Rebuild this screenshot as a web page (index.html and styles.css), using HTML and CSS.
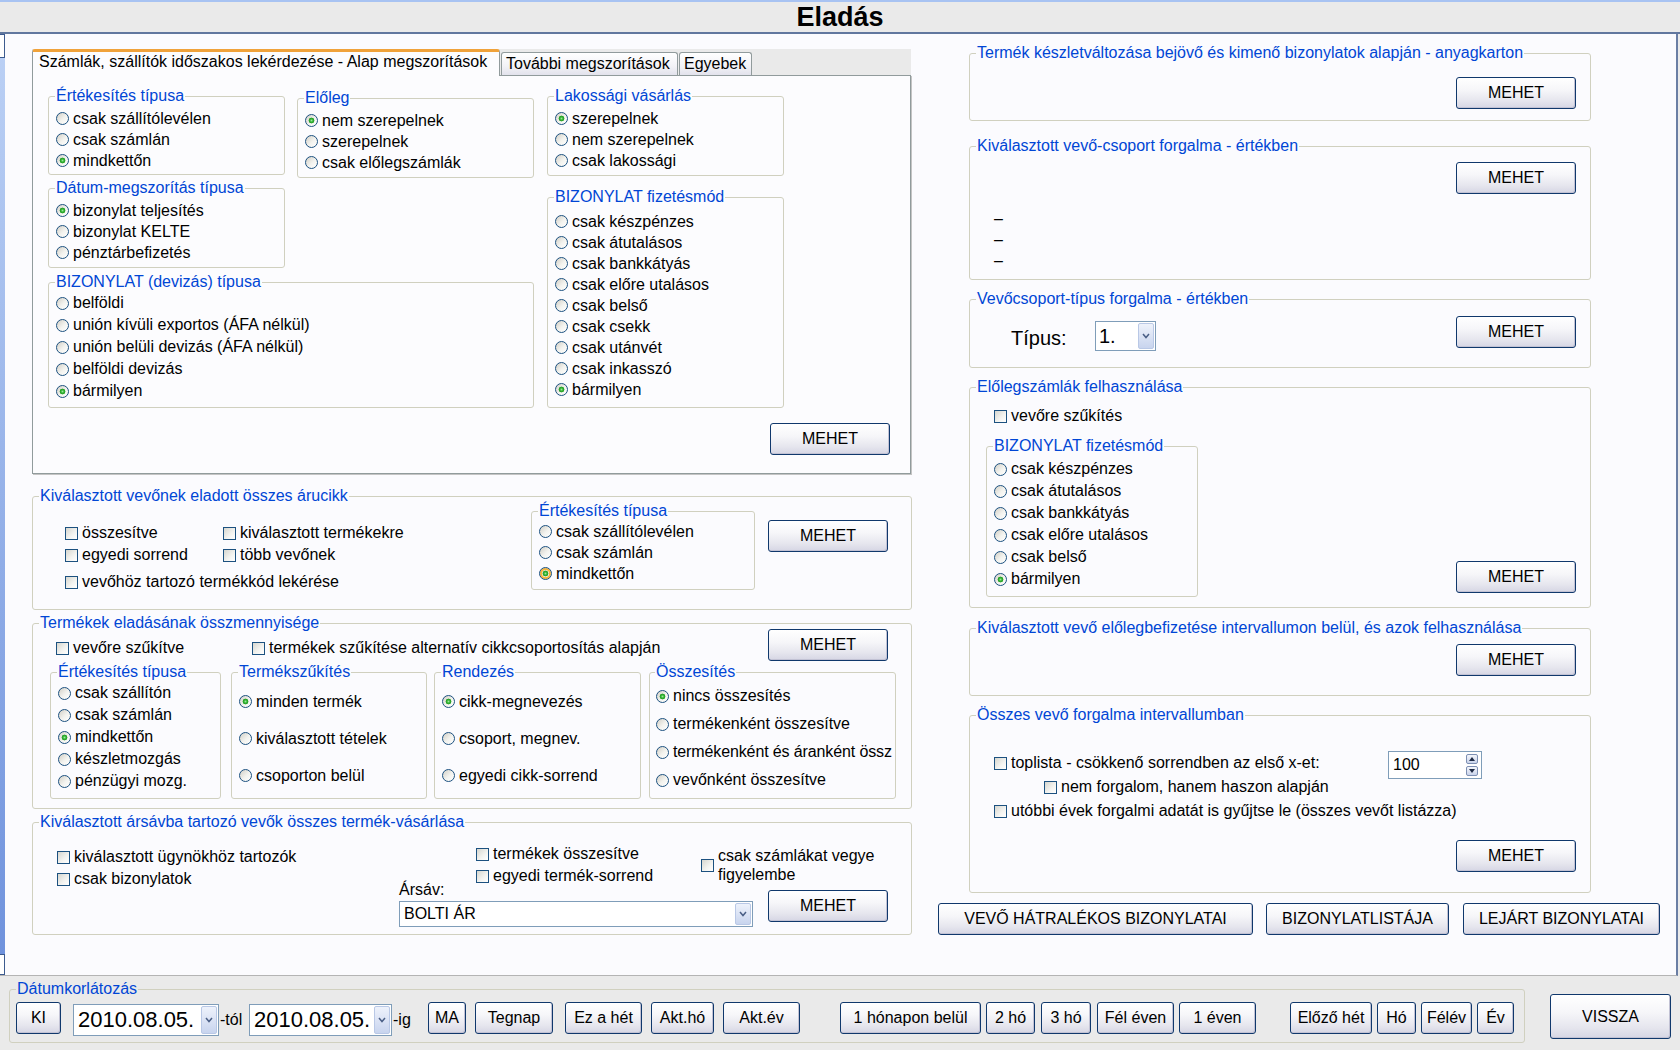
FILE: index.html
```html
<!DOCTYPE html>
<html lang="hu">
<head>
<meta charset="utf-8">
<title>Eladás</title>
<link rel="stylesheet" href="styles.css">
</head>
<body>
<div class="titlebar"><h1>Eladás</h1></div>
<div class="main">
  <div class="strip"><span class="cap cap-top"></span><span class="cap cap-bot"></span></div>

  <div class="leftcol">
    <div class="tabs">
      <div class="tab active">Számlák, szállítók időszakos lekérdezése - Alap megszorítások</div>
      <div class="tab t2">További megszorítások</div>
      <div class="tab t3">Egyebek</div>
    </div>
    <div class="tabpanel">
      <div class="tp-body">
        <div class="tp-left">
          <div class="tp-row">
            <div class="gb g-ert">
              <div class="gt">Értékesítés típusa</div>
              <div class="opts p3">
                <label class="opt"><i class="rb"></i>csak szállítólevélen</label>
                <label class="opt"><i class="rb"></i>csak számlán</label>
                <label class="opt"><i class="rb on"></i>mindkettőn</label>
              </div>
            </div>
            <div class="gb g-elo">
              <div class="gt">Előleg</div>
              <div class="opts p3">
                <label class="opt"><i class="rb on"></i>nem szerepelnek</label>
                <label class="opt"><i class="rb"></i>szerepelnek</label>
                <label class="opt"><i class="rb"></i>csak előlegszámlák</label>
              </div>
            </div>
          </div>
          <div class="gb g-datum">
            <div class="gt">Dátum-megszorítás típusa</div>
            <div class="opts p3">
              <label class="opt"><i class="rb on"></i>bizonylat teljesítés</label>
              <label class="opt"><i class="rb"></i>bizonylat KELTE</label>
              <label class="opt"><i class="rb"></i>pénztárbefizetés</label>
            </div>
          </div>
          <div class="gb g-deviza">
            <div class="gt">BIZONYLAT (devizás) típusa</div>
            <div class="opts p1">
              <label class="opt o22"><i class="rb"></i>belföldi</label>
              <label class="opt o22"><i class="rb"></i>unión kívüli exportos (ÁFA nélkül)</label>
              <label class="opt o22"><i class="rb"></i>unión belüli devizás (ÁFA nélkül)</label>
              <label class="opt o22"><i class="rb"></i>belföldi devizás</label>
              <label class="opt o22"><i class="rb on"></i>bármilyen</label>
            </div>
          </div>
        </div>
        <div class="tp-right">
          <div class="gb g-lak">
            <div class="gt">Lakossági vásárlás</div>
            <div class="opts p3">
              <label class="opt"><i class="rb on"></i>szerepelnek</label>
              <label class="opt"><i class="rb"></i>nem szerepelnek</label>
              <label class="opt"><i class="rb"></i>csak lakossági</label>
            </div>
          </div>
          <div class="gb g-fiz">
            <div class="gt">BIZONYLAT fizetésmód</div>
            <div class="opts p5">
              <label class="opt"><i class="rb"></i>csak készpénzes</label>
              <label class="opt"><i class="rb"></i>csak átutalásos</label>
              <label class="opt"><i class="rb"></i>csak bankkátyás</label>
              <label class="opt"><i class="rb"></i>csak előre utalásos</label>
              <label class="opt"><i class="rb"></i>csak belső</label>
              <label class="opt"><i class="rb"></i>csak csekk</label>
              <label class="opt"><i class="rb"></i>csak utánvét</label>
              <label class="opt"><i class="rb"></i>csak inkasszó</label>
              <label class="opt"><i class="rb on"></i>bármilyen</label>
            </div>
          </div>
        </div>
      </div>
      <div class="tp-foot"><button class="btn mehet">MEHET</button></div>
    </div>

    <div class="gb big secA">
      <div class="gt">Kiválasztott vevőnek eladott összes árucikk</div>
      <div class="a-body">
        <div class="a-checks">
          <label class="opt o22"><i class="cb"></i>összesítve</label>
          <label class="opt o22"><i class="cb"></i>kiválasztott termékekre</label>
          <label class="opt o22"><i class="cb"></i>egyedi sorrend</label>
          <label class="opt o22"><i class="cb"></i>több vevőnek</label>
          <label class="opt o22 span2"><i class="cb"></i>vevőhöz tartozó termékkód lekérése</label>
        </div>
        <div class="gb a-ert">
          <div class="gt">Értékesítés típusa</div>
          <div class="opts p1">
            <label class="opt"><i class="rb"></i>csak szállítólevélen</label>
            <label class="opt"><i class="rb"></i>csak számlán</label>
            <label class="opt"><i class="rb on hot"></i>mindkettőn</label>
          </div>
        </div>
        <button class="btn mehet a-btn">MEHET</button>
      </div>
    </div>

    <div class="gb big secB">
      <div class="gt">Termékek eladásának összmennyisége</div>
      <div class="b-top">
        <label class="opt o22 b-c1"><i class="cb"></i>vevőre szűkítve</label>
        <label class="opt o22 b-c2"><i class="cb"></i>termékek szűkítése alternatív cikkcsoportosítás alapján</label>
        <button class="btn mehet b-btn">MEHET</button>
      </div>
      <div class="b-groups">
        <div class="gb b-g1">
          <div class="gt">Értékesítés típusa</div>
          <div class="opts p1">
            <label class="opt o22"><i class="rb"></i>csak szállítón</label>
            <label class="opt o22"><i class="rb"></i>csak számlán</label>
            <label class="opt o22"><i class="rb on"></i>mindkettőn</label>
            <label class="opt o22"><i class="rb"></i>készletmozgás</label>
            <label class="opt o22"><i class="rb"></i>pénzügyi mozg.</label>
          </div>
        </div>
        <div class="gb b-g2">
          <div class="gt">Termékszűkítés</div>
          <div class="opts p2">
            <label class="opt o37"><i class="rb on"></i>minden termék</label>
            <label class="opt o37"><i class="rb"></i>kiválasztott tételek</label>
            <label class="opt o37"><i class="rb"></i>csoporton belül</label>
          </div>
        </div>
        <div class="gb b-g3">
          <div class="gt">Rendezés</div>
          <div class="opts p2">
            <label class="opt o37"><i class="rb on"></i>cikk-megnevezés</label>
            <label class="opt o37"><i class="rb"></i>csoport, megnev.</label>
            <label class="opt o37"><i class="rb"></i>egyedi cikk-sorrend</label>
          </div>
        </div>
        <div class="gb b-g4">
          <div class="gt">Összesítés</div>
          <div class="opts p1">
            <label class="opt o28"><i class="rb on"></i>nincs összesítés</label>
            <label class="opt o28"><i class="rb"></i>termékenként összesítve</label>
            <label class="opt o28 tight"><i class="rb"></i>termékenként és áranként össz</label>
            <label class="opt o28"><i class="rb"></i>vevőnként összesítve</label>
          </div>
        </div>
      </div>
    </div>

    <div class="gb big secC">
      <div class="gt">Kiválasztott ársávba tartozó vevők összes termék-vásárlása</div>
      <div class="c-body">
        <div class="c-colA">
          <label class="opt o22"><i class="cb"></i>kiválasztott ügynökhöz tartozók</label>
          <label class="opt o22"><i class="cb"></i>csak bizonylatok</label>
        </div>
        <div class="c-colB">
          <div class="c-top">
            <div class="c-col2">
              <label class="opt o22"><i class="cb"></i>termékek összesítve</label>
              <label class="opt o22"><i class="cb"></i>egyedi termék-sorrend</label>
            </div>
            <label class="opt c-col3"><i class="cb"></i><span class="wrap">csak számlákat vegye figyelembe</span></label>
          </div>
          <div class="c-bottom">
            <div class="c-arsav">
              <div class="c-label">Ársáv:</div>
              <div class="combo c-select"><span class="ctext">BOLTI ÁR</span><span class="dd"><svg width="8" height="6" viewBox="0 0 8 6"><polyline points="1,1 4,4.5 7,1" fill="none" stroke="#4a5f86" stroke-width="1.5"/></svg></span></div>
            </div>
            <button class="btn mehet c-btn">MEHET</button>
          </div>
        </div>
      </div>
    </div>
  </div>

  <div class="rightcol">
    <div class="gb rf f1">
      <div class="gt">Termék készletváltozása bejövő és kimenő bizonylatok alapján - anyagkarton</div>
      <div class="rf-btnrow m15"><button class="btn mehet">MEHET</button></div>
    </div>
    <div class="gb rf f2">
      <div class="gt">Kiválasztott vevő-csoport forgalma - értékben</div>
      <div class="rf-btnrow m7"><button class="btn mehet">MEHET</button></div>
      <div class="dashes">
        <div class="dash">–</div>
        <div class="dash">–</div>
        <div class="dash">–</div>
      </div>
    </div>
    <div class="gb rf f3">
      <div class="gt">Vevőcsoport-típus forgalma - értékben</div>
      <div class="f3-row">
        <div class="tipus">Típus:</div>
        <div class="combo tipus-sel"><span class="ctext">1.</span><span class="dd"><svg width="8" height="6" viewBox="0 0 8 6"><polyline points="1,1 4,4.5 7,1" fill="none" stroke="#4a5f86" stroke-width="1.5"/></svg></span></div>
        <button class="btn mehet f3-btn">MEHET</button>
      </div>
    </div>
    <div class="gb rf f4">
      <div class="gt">Előlegszámlák felhasználása</div>
      <label class="opt o22 f4-check"><i class="cb"></i>vevőre szűkítés</label>
      <div class="f4-row">
        <div class="gb f4-g">
          <div class="gt">BIZONYLAT fizetésmód</div>
          <div class="opts p3">
            <label class="opt o22"><i class="rb"></i>csak készpénzes</label>
            <label class="opt o22"><i class="rb"></i>csak átutalásos</label>
            <label class="opt o22"><i class="rb"></i>csak bankkátyás</label>
            <label class="opt o22"><i class="rb"></i>csak előre utalásos</label>
            <label class="opt o22"><i class="rb"></i>csak belső</label>
            <label class="opt o22"><i class="rb on"></i>bármilyen</label>
          </div>
        </div>
        <button class="btn mehet f4-btn">MEHET</button>
      </div>
    </div>
    <div class="gb rf f5">
      <div class="gt">Kiválasztott vevő előlegbefizetése intervallumon belül, és azok felhasználása</div>
      <div class="rf-btnrow m7"><button class="btn mehet">MEHET</button></div>
    </div>
    <div class="gb rf f6">
      <div class="gt">Összes vevő forgalma intervallumban</div>
      <div class="f6-row1">
        <label class="opt o22 f6-top"><i class="cb"></i>toplista - csökkenő sorrendben az első x-et:</label>
        <div class="spin"><span class="stext">100</span>
          <span class="sbtns">
            <span class="sb"><svg width="6" height="4" viewBox="0 0 6 4"><polygon points="0,4 3,0 6,4" fill="#1e2a44"/></svg></span>
            <span class="sb"><svg width="6" height="4" viewBox="0 0 6 4"><polygon points="0,0 6,0 3,4" fill="#1e2a44"/></svg></span>
          </span>
        </div>
      </div>
      <label class="opt o22 f6-r2"><i class="cb"></i>nem forgalom, hanem haszon alapján</label>
      <label class="opt o22 f6-r3"><i class="cb"></i>utóbbi évek forgalmi adatát is gyűjtse le (összes vevőt listázza)</label>
      <div class="rf-btnrow m18"><button class="btn mehet">MEHET</button></div>
    </div>
    <div class="bigbtns">
      <button class="btn bb1">VEVŐ HÁTRALÉKOS BIZONYLATAI</button>
      <button class="btn bb2">BIZONYLATLISTÁJA</button>
      <button class="btn bb3">LEJÁRT BIZONYLATAI</button>
    </div>
  </div>
</div>

<div class="footer">
  <div class="gb datebox">
    <div class="gt">Dátumkorlátozás</div>
    <div class="d-row">
      <button class="btn d-ki">KI</button>
      <div class="combo dcombo d1"><span class="dtext">2010.08.05.</span><span class="dd"><svg width="8" height="6" viewBox="0 0 8 6"><polyline points="1,1 4,4.5 7,1" fill="none" stroke="#4a5f86" stroke-width="1.5"/></svg></span></div>
      <span class="suf suf-tol">-tól</span>
      <div class="combo dcombo d2"><span class="dtext">2010.08.05.</span><span class="dd"><svg width="8" height="6" viewBox="0 0 8 6"><polyline points="1,1 4,4.5 7,1" fill="none" stroke="#4a5f86" stroke-width="1.5"/></svg></span></div>
      <span class="suf suf-ig">-ig</span>
      <button class="btn w38 ml1">MA</button>
      <button class="btn w78 ml9">Tegnap</button>
      <button class="btn w77 ml12">Ez a hét</button>
      <button class="btn w63 ml9">Akt.hó</button>
      <button class="btn w77 ml9">Akt.év</button>
      <button class="btn w141 ml40">1 hónapon belül</button>
      <button class="btn w49 ml5">2 hó</button>
      <button class="btn w50 ml6">3 hó</button>
      <button class="btn w77 ml6">Fél éven</button>
      <button class="btn w77 ml5">1 éven</button>
      <button class="btn w82 ml34">Előző hét</button>
      <button class="btn w39 ml5">Hó</button>
      <button class="btn w51 ml5">Félév</button>
      <button class="btn w37 ml5">Év</button>
    </div>
  </div>
  <button class="btn vissza">VISSZA</button>
</div>
</body>
</html>
```

FILE: styles.css
```css
* { box-sizing: border-box; }
html, body { margin: 0; padding: 0; }
body {
  width: 1680px;
  height: 1050px;
  overflow: hidden;
  font-family: "Liberation Sans", Arial, sans-serif;
  font-size: 16px;
  color: #000;
  background: #eaeaea;
}
button {
  font: inherit;
  color: inherit;
  margin: 0;
  padding: 0;
}

/* title bar */
.titlebar {
  height: 34px;
  border-top: 2px solid #a8c3f2;
  border-bottom: 2px solid #61779e;
  background: #eaeaea;
  text-align: center;
}
.titlebar h1 {
  margin: 0;
  font-size: 27px;
  line-height: 30px;
  font-weight: bold;
}

/* main area */
.main {
  display: flex;
  align-items: flex-start;
  width: 1678px;
  height: 942px;
  background: #fbfbfe;
  border-right: 2px solid #6a7ea4;
  border-bottom: 1px solid #b4b4b4;
}
.strip {
  align-self: stretch;
  width: 5px;
  flex: none;
  display: flex;
  flex-direction: column;
  justify-content: space-between;
  background: linear-gradient(#bcd1f5, #6e91dc);
}
.strip .cap {
  background: #fff;
  border: 1px solid #3d5b8f;
  border-left: 0;
}
.cap-top { height: 24px; }
.cap-bot { height: 21px; }

.leftcol {
  width: 880px;
  margin-left: 27px;
  flex: none;
}
.rightcol {
  width: 722px;
  margin-left: 26px;
  padding-top: 19px;
  flex: none;
}

/* tabs */
.tabs {
  display: flex;
  align-items: flex-end;
  width: 879px;
  height: 26px;
  margin-top: 15px;
  background: #eaeaea;
}
.tab {
  height: 23px;
  border: 1px solid #919b9c;
  border-bottom: 0;
  border-radius: 3px 3px 0 0;
  background: linear-gradient(#ffffff, #f2f2f6 60%, #e2e2ec);
  padding: 0 4px;
  line-height: 21px;
  white-space: nowrap;
}
.tab.active {
  position: relative;
  z-index: 1;
  width: 468px;
  height: 27px;
  margin-bottom: -1px;
  padding-left: 6px;
  background: #fcfcfe;
  border-top: 3px solid #f0a23a;
  line-height: 20px;
}
.tab.t2 { width: 177px; margin-left: 1px; }
.tab.t3 { width: 73px; margin-left: 1px; }

.tabpanel {
  width: 879px;
  height: 399px;
  border: 1px solid #919b9c;
  box-shadow: 1px 1px 0 #c4c4c4;
  background: #fcfcfe;
  padding: 20px 0 0 15px;
}
.tabpanel .gt { background: #fcfcfe; }
.tp-body { display: flex; gap: 13px; }
.tp-left { width: 486px; }
.tp-row { display: flex; gap: 12px; align-items: flex-start; }
.tp-right { width: 237px; }
.g-ert { width: 237px; height: 79px; }
.g-elo { width: 237px; height: 80px; margin-top: 2px; }
.g-datum { width: 237px; height: 80px; margin-top: 10px; }
.g-deviza { width: 486px; height: 126px; margin-top: 14px; }
.g-lak { height: 80px; }
.g-fiz { height: 211px; margin-top: 21px; }
.tp-foot {
  display: flex;
  justify-content: flex-end;
  padding-right: 20px;
  margin-top: 15px;
}

/* group boxes */
.gb {
  border: 1px solid #d0d0bf;
  border-radius: 3px;
  padding: 0 0 0 7px;
}
.gt {
  display: table;
  margin: -10px 0 0 -1px;
  padding: 0 1px;
  line-height: 18px;
  color: #0046d5;
  background: #fbfbfe;
  white-space: nowrap;
}
.big { padding-left: 0; width: 880px; }
.big > .gt { margin-left: 6px; }

.opts.p1 { padding-top: 1px; }
.opts.p2 { padding-top: 2px; }
.opts.p3 { padding-top: 3px; }
.opts.p5 { padding-top: 5px; }

.opt {
  display: flex;
  align-items: center;
  height: 21px;
  white-space: nowrap;
}
.opt.o22 { height: 22px; }
.opt.o28 { height: 28px; }
.opt.o37 { height: 37px; }
.opt.tight { letter-spacing: -0.12px; }

.rb {
  flex: none;
  width: 13px;
  height: 13px;
  margin-right: 4px;
  border: 1px solid #1c5180;
  border-radius: 50%;
  background: linear-gradient(135deg, #d2cfc6 0%, #f3f3ef 55%, #ffffff 100%);
}
.rb.on {
  background:
    radial-gradient(circle, #9ae69a 0, #3cb83c 1.4px, #1f9a1f 2.6px, rgba(31,154,31,0) 3.2px),
    linear-gradient(135deg, #d2cfc6 0%, #f3f3ef 55%, #ffffff 100%);
}
.rb.hot { box-shadow: inset 0 0 0 2px #f7b53a; }
.cb {
  flex: none;
  width: 13px;
  height: 13px;
  margin-right: 4px;
  border: 1px solid #1c5180;
  background: linear-gradient(135deg, #d6d6cf 0%, #f4f4f1 60%, #ffffff 100%);
}

/* buttons */
.btn {
  flex: none;
  display: flex;
  align-items: center;
  justify-content: center;
  height: 32px;
  border: 1px solid #10386c;
  border-radius: 3px;
  background: linear-gradient(#ffffff 0%, #f6f6f9 40%, #e6e6ee 75%, #d6d6e4 100%);
  box-shadow: inset -1px -1px 0 #c2c2d4;
  white-space: nowrap;
}
.mehet { width: 120px; }

/* section A */
.secA { height: 114px; margin-top: 22px; }
.a-body {
  display: flex;
  align-items: flex-start;
  padding-left: 32px;
}
.a-checks {
  width: 466px;
  padding-top: 17px;
  display: grid;
  grid-template-columns: 158px auto;
}
.a-checks .span2 { grid-column: 1 / span 2; margin-top: 5px; }
.a-ert { width: 224px; height: 79px; margin-top: 6px; }
.a-btn { margin-left: 13px; margin-top: 15px; }

/* section B */
.secB { height: 186px; margin-top: 13px; }
.b-top {
  display: flex;
  align-items: flex-start;
  height: 32px;
  margin-top: -3px;
}
.b-c1 { width: 196px; margin-left: 23px; margin-top: 8px; }
.b-c2 { margin-top: 8px; }
.b-btn { margin-left: auto; margin-right: 23px; }
.b-groups {
  display: flex;
  align-items: flex-start;
  margin-top: 11px;
  padding-left: 17px;
}
.b-g1 { width: 171px; height: 127px; }
.b-g2 { width: 196px; height: 127px; margin-left: 10px; }
.b-g3 { width: 207px; height: 127px; margin-left: 7px; }
.b-g4 { width: 247px; height: 127px; margin-left: 8px; padding-left: 6px; }

/* section C */
.secC { height: 113px; margin-top: 13px; }
.c-body { display: flex; padding-left: 24px; }
.c-colA { width: 342px; padding-top: 15px; }
.c-colB { width: 489px; }
.c-top { display: flex; padding-top: 12px; }
.c-col2 { width: 225px; margin-left: 77px; }
.c-col3 { width: 187px; height: auto; white-space: normal; }
.c-col3 .wrap { line-height: 19px; width: 166px; }
.c-bottom { display: flex; align-items: flex-start; margin-top: -6px; }
.c-arsav { width: 354px; }
.c-label { line-height: 18px; }
.c-select { margin-top: 2px; height: 26px; width: 354px; }
.c-btn { margin-left: 15px; margin-top: 9px; }

/* combos */
.combo {
  display: flex;
  align-items: stretch;
  background: #ffffff;
  border: 1px solid #7f9db9;
}
.combo .ctext {
  flex: 1;
  padding-left: 4px;
  display: flex;
  align-items: center;
  white-space: nowrap;
}
.dd {
  flex: none;
  width: 16px;
  margin: 1px;
  display: flex;
  align-items: center;
  justify-content: center;
  border: 1px solid #b9c8e6;
  border-radius: 2px;
  background: linear-gradient(#eef2fb, #c8d4ee);
}

/* right column */
.rf { width: 622px; margin-left: 31px; }
.rf-btnrow { display: flex; justify-content: flex-end; padding-right: 14px; }
.m7 { margin-top: 7px; }
.m15 { margin-top: 15px; }
.m18 { margin-top: 18px; }
.f1 { height: 68px; }
.f2 { height: 134px; margin-top: 25px; }
.dashes { margin-top: 14px; margin-left: 17px; }
.dash { line-height: 21px; height: 21px; }
.f3 { height: 69px; margin-top: 19px; }
.f3-row { display: flex; align-items: flex-start; margin-top: 8px; height: 32px; }
.tipus { width: 84px; margin-left: 34px; margin-top: 10px; font-size: 20px; line-height: 24px; }
.tipus-sel { width: 61px; height: 30px; margin-top: 5px; font-size: 20px; }
.tipus-sel .ctext { padding-left: 3px; }
.f3-btn { margin-left: auto; margin-right: 14px; }
.f4 { height: 221px; margin-top: 19px; }
.f4-check { margin-top: 9px; margin-left: 17px; }
.f4-row { display: flex; align-items: flex-end; margin-top: 19px; }
.f4-g { width: 212px; height: 151px; margin-left: 9px; }
.f4-btn { margin-left: auto; margin-right: 14px; margin-bottom: 4px; }
.f5 { height: 68px; margin-top: 20px; }
.f6 { height: 178px; margin-top: 19px; }
.f6-row1 { display: flex; align-items: flex-start; margin-top: 27px; }
.f6-top { width: 394px; margin-left: 17px; margin-top: 1px; }
.spin {
  display: flex;
  align-items: center;
  width: 94px;
  height: 28px;
  border: 1px solid #7f9db9;
  background: #fff;
}
.stext { flex: 1; padding-left: 4px; }
.sbtns {
  display: flex;
  flex-direction: column;
  gap: 2px;
  margin-right: 3px;
}
.sb {
  width: 12px;
  height: 10px;
  display: flex;
  align-items: center;
  justify-content: center;
  border: 1px solid #7d8fb3;
  border-radius: 2px;
  background: linear-gradient(#f4f6fb, #c9d3ea);
}
.f6-r2 { margin-left: 67px; margin-top: -3px; }
.f6-r3 { margin-left: 17px; margin-top: 2px; }
.bigbtns { display: flex; margin-top: 10px; }
.bb1 { width: 315px; }
.bb2 { width: 183px; margin-left: 13px; }
.bb3 { width: 197px; margin-left: 14px; }

/* footer */
.footer {
  display: flex;
  align-items: flex-start;
  height: 73px;
  background: #eaeaea;
}
.footer .gt { background: #eaeaea; }
.datebox {
  width: 1516px;
  height: 54px;
  margin-left: 9px;
  margin-top: 13px;
}
.d-row { display: flex; align-items: flex-start; margin-top: 4px; }
.d-ki { width: 45px; margin-left: -1px; }
.dcombo { height: 32px; margin-top: 2px; font-size: 22px; }
.dtext { flex: 1; padding-left: 4px; display: flex; align-items: center; white-space: nowrap; }
.d1 { width: 146px; margin-left: 12px; }
.d2 { width: 143px; }
.suf { line-height: 32px; height: 32px; margin-top: 2px; padding-left: 1px; }
.suf-tol { width: 30px; }
.suf-ig { width: 35px; }
.vissza { width: 121px; height: 45px; margin-left: 25px; margin-top: 18px; }

.w37 { width: 37px; } .w38 { width: 38px; } .w39 { width: 39px; }
.w49 { width: 49px; } .w50 { width: 50px; } .w51 { width: 51px; }
.w63 { width: 63px; } .w77 { width: 77px; } .w78 { width: 78px; }
.w82 { width: 82px; } .w141 { width: 141px; }
.ml1 { margin-left: 1px; } .ml5 { margin-left: 5px; } .ml6 { margin-left: 6px; }
.ml9 { margin-left: 9px; } .ml12 { margin-left: 12px; } .ml34 { margin-left: 34px; }
.ml40 { margin-left: 40px; }
```
